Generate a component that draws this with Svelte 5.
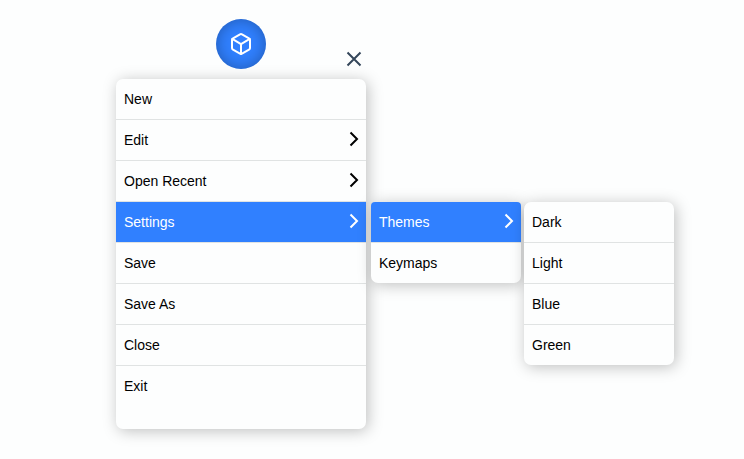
<script>
  const themes = ['Dark', 'Light', 'Blue', 'Green'].map((label) => ({ label }));
  const items = [
    { label: 'New' },
    { label: 'Edit', more: true },
    { label: 'Open Recent', more: true },
    {
      label: 'Settings',
      more: true,
      children: [{ label: 'Themes', more: true, children: themes }, { label: 'Keymaps' }]
    },
    { label: 'Save' },
    { label: 'Save As' },
    { label: 'Close' },
    { label: 'Exit' }
  ];
</script>

{#snippet menu(entries, level)}
  <ul class="menu level-{level}">
    {#each entries as item}
      <li>
        <button type="button" class="item" class:active={item.children} aria-expanded={item.more ? !!item.children : undefined}>
          <span>{item.label}</span>
          {#if item.more}
            <svg class="chevron" viewBox="0 0 10 16" aria-hidden="true"><path d="M1.500 1.500 8 8l-6.500 6.500" /></svg>
          {/if}
        </button>
        {#if item.children}
          {@render menu(item.children, level + 1)}
        {/if}
      </li>
    {/each}
  </ul>
{/snippet}

<main>
  <nav aria-label="Main menu">
    <header>
      <button type="button" class="launcher" aria-label="Toggle menu">
        <svg viewBox="0 0 24 24" aria-hidden="true">
          <path d="M21 16V8a2 2 0 0 0-1-1.730l-7-4a2 2 0 0 0-2 0l-7 4A2 2 0 0 0 3 8v8a2 2 0 0 0 1 1.730l7 4a2 2 0 0 0 2 0l7-4A2 2 0 0 0 21 16z" />
          <path d="M3.270 6.960 12 12.010l8.730-5.050M12 22.080V12" />
        </svg>
      </button>
      <button type="button" class="close" aria-label="Close menu">
        <svg viewBox="0 0 16 16" aria-hidden="true"><path d="m1.500 1.500 13 13m0-13-13 13" /></svg>
      </button>
    </header>
    {@render menu(items, 0)}
  </nav>
</main>

<style>
  :global(body) {
    margin: 0;
    background: #fdfefe;
    overflow-x: hidden;
  }

  main {
    padding: 19px 16px 30px 116px;
    font-family: 'Liberation Sans', Arial, sans-serif;
    font-size: 14px;
    line-height: 20px;
    color: #000;
  }

  nav {
    width: 250px;
  }

  button {
    padding: 0;
    border: 0;
    background: none;
    color: inherit;
    font: inherit;
    cursor: pointer;
  }

  svg {
    display: block;
    fill: none;
    stroke: currentColor;
    stroke-width: 2;
  }

  header {
    display: grid;
    grid-template-columns: 1fr auto 1fr;
    align-items: end;
    padding-bottom: 10px;
  }

  .launcher {
    grid-column: 2;
    display: grid;
    place-items: center;
    width: 50px;
    height: 50px;
    border-radius: 50%;
    background: #3080ff;
    box-shadow: inset 0 0 15px rgba(0, 0, 0, 0.3);
    color: #fff;
  }

  .launcher svg {
    width: 24px;
    height: 24px;
    stroke-linecap: round;
    stroke-linejoin: round;
  }

  .close {
    justify-self: end;
    margin: 0 4px 2px 0;
    color: #34465a;
  }

  .close svg {
    width: 16px;
    height: 16px;
  }

  .menu {
    box-sizing: border-box;
    margin: 0;
    padding: 0;
    border-radius: 7px;
    background: #fdfefe;
    box-shadow: 2px 2px 15px rgba(0, 0, 0, 0.25);
    list-style: none;
  }

  .level-0 {
    padding-bottom: 23px;
  }

  .level-1,
  .level-2 {
    position: absolute;
    top: 0;
    left: calc(100% + 5px);
    z-index: 1;
    width: 150px;
  }

  .level-2 {
    left: calc(100% + 3px);
  }

  li {
    position: relative;
    border-bottom: 1px solid #e0e3e3;
  }

  li:last-child {
    border-bottom: 0;
  }

  .item {
    display: flex;
    align-items: center;
    justify-content: space-between;
    width: 100%;
    height: 40px;
    padding: 0 7px 0 8px;
    text-align: left;
  }

  .active {
    background: #3080ff;
    color: #fff;
  }

  .level-1 > li:first-child > .active {
    border-radius: 4px 4px 0 0;
  }

  .chevron {
    width: 10px;
    height: 16px;
    margin-bottom: 2px;
  }
</style>
